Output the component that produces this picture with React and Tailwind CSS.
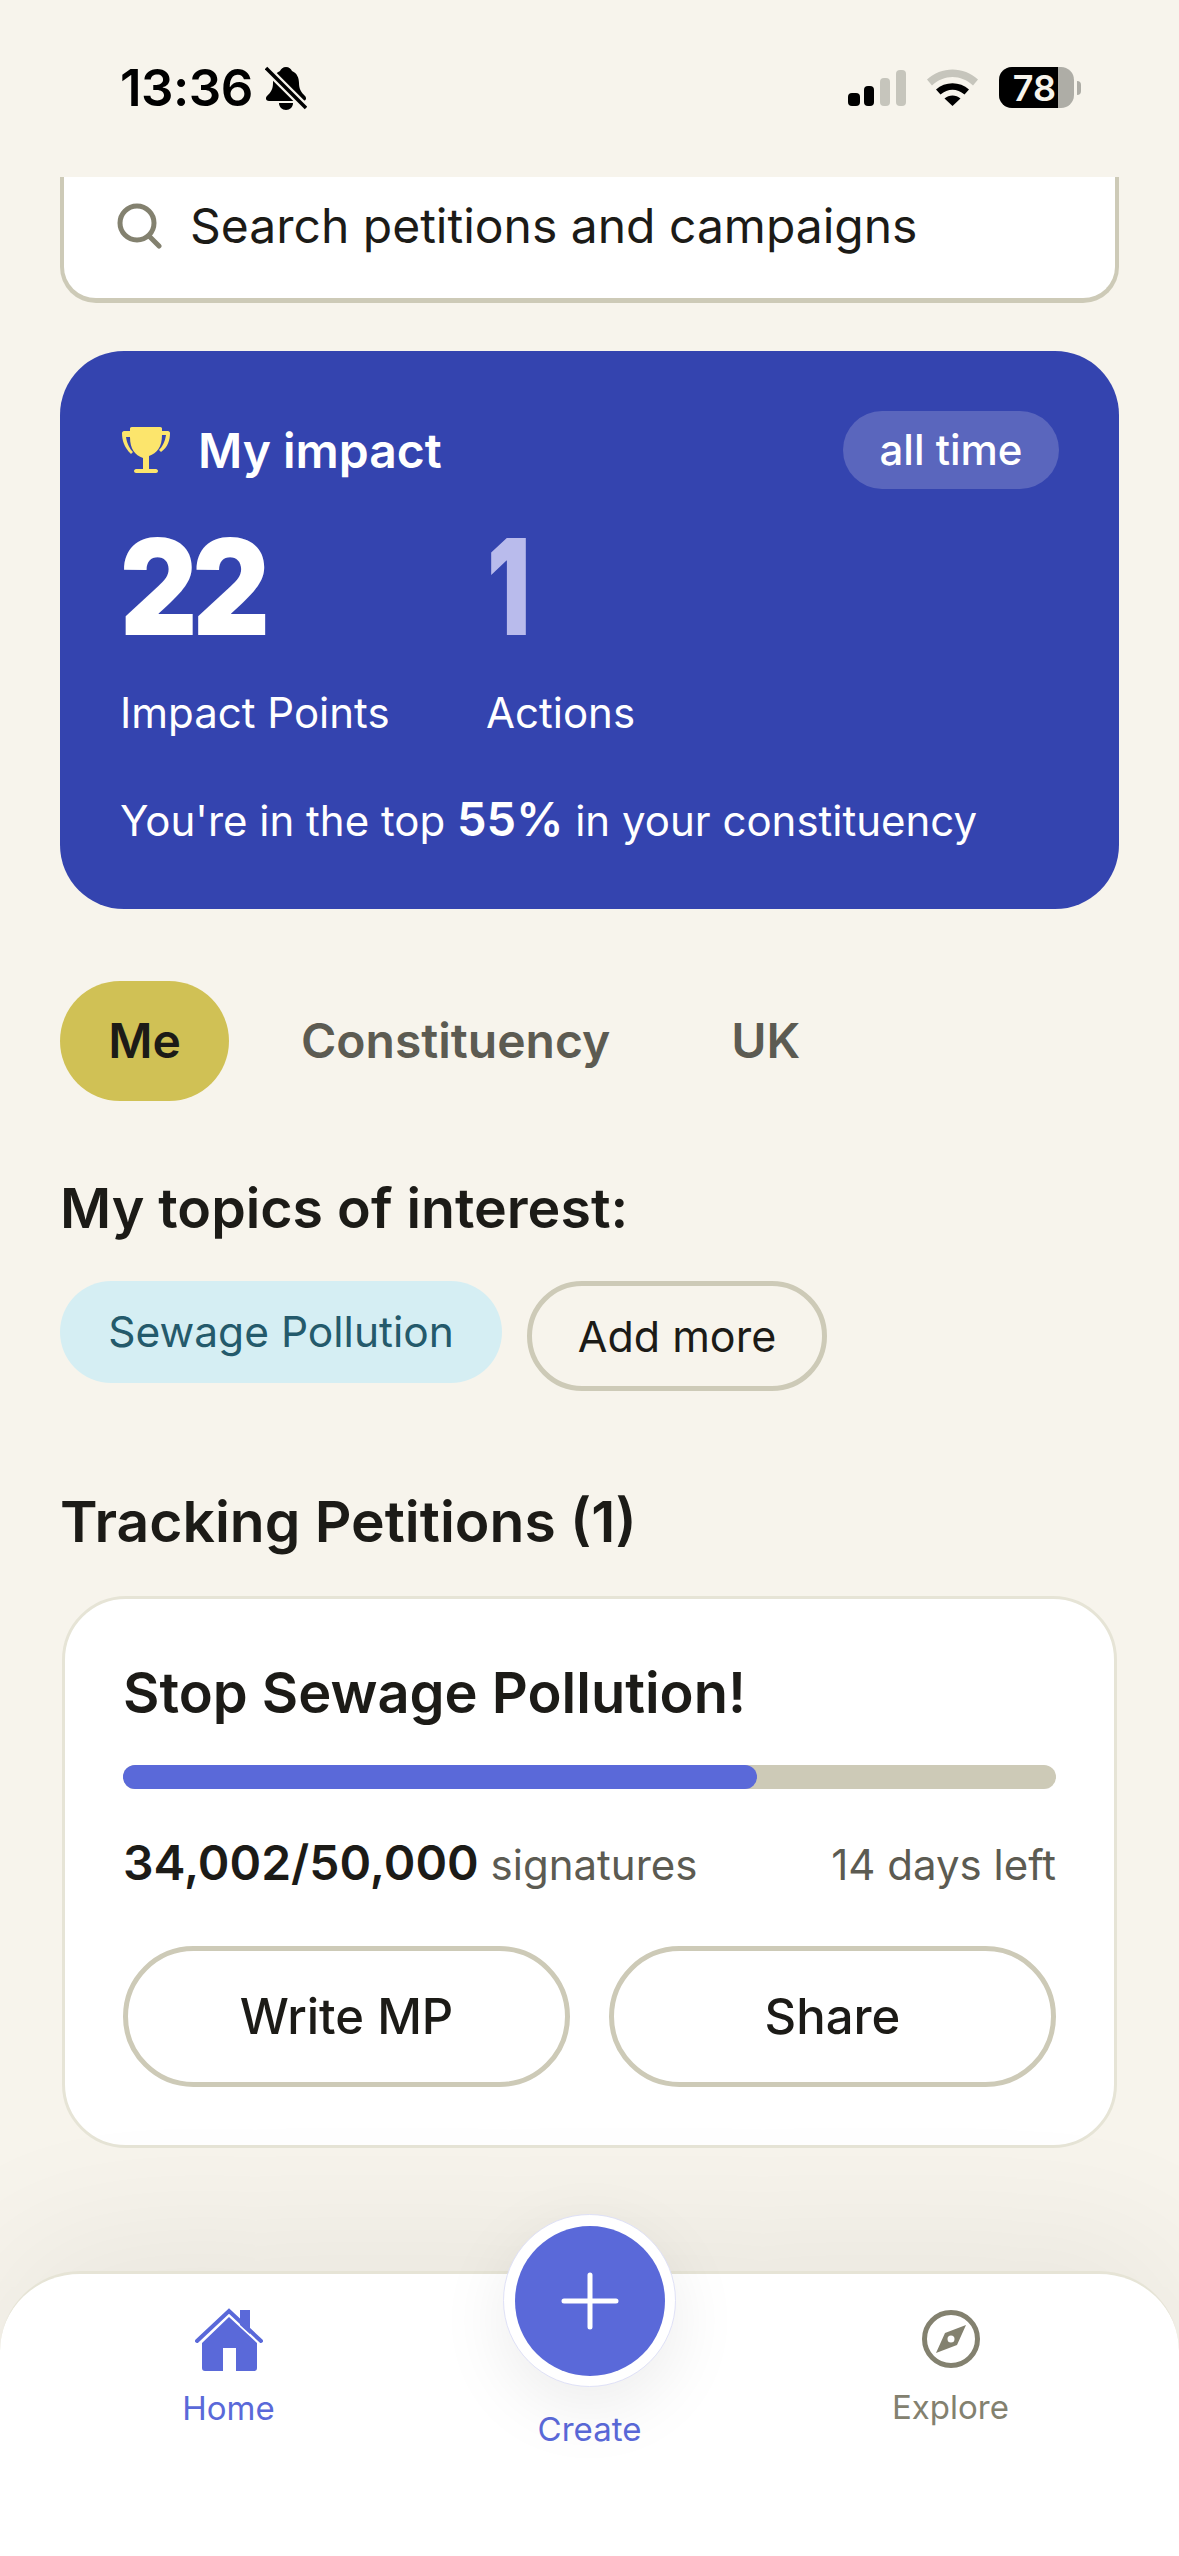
const StatusBar = () => {
  return (
    <div className="h-[177px] shrink-0 relative flex items-start justify-between pt-[67px] pl-[120px] pr-[98px]">
      <div className="flex items-center gap-[12px] h-[41px]">
        <span className="font-['Inter'] text-[51px] leading-none font-semibold text-black tracking-[-0.01em]">13:36</span>
        <svg width="42" height="44" viewBox="0 0 42 44">
          <path d="M21 1c3 0 5 2 6 4 5 2 7 7 7 12 0 6 2 9 6 13 2 2 1 5-2 5H4c-3 0-4-3-2-5 4-4 6-7 6-13 0-5 2-10 7-12 1-2 3-4 6-4z" fill="#000" />
          <path d="M14 37h14c0 4-3 7-7 7s-7-3-7-7z" fill="#000" />
          <path d="M1 2l40 40" stroke="#f7f4ec" strokeWidth="8" />
          <path d="M1 2l40 40" stroke="#000" strokeWidth="3.5" />
        </svg>
      </div>
      <div className="flex items-center h-[41px] gap-[21px]">
        <svg width="58" height="36" viewBox="0 0 58 36">
          <rect x="0" y="23" width="12" height="13" rx="4" fill="#000" />
          <rect x="16" y="16" width="10" height="20" rx="4" fill="#000" />
          <rect x="32" y="8" width="10" height="28" rx="4" fill="#c6c5bc" />
          <rect x="48" y="0" width="10" height="36" rx="4" fill="#c6c5bc" />
        </svg>
        <svg width="51" height="37" viewBox="0 0 51 37">
          <path d="M0 10.5C14-3 37-3 51 10.5l-5 6C34 5 17 5 5 16.5z" fill="#c6c5bc" />
          <path d="M9 20.5C18 12 33 12 42 20.5l-4.500 5C30 19 21 19 13.500 25.500z" fill="#000" />
          <path d="M17.500 29.500c4.500-4 11.500-4 16 0L25.500 37z" fill="#000" />
        </svg>
        <div className="flex items-center gap-[3px]">
          <div className="w-[75px] h-[41px] rounded-[13px] overflow-hidden flex bg-[#aeada6]">
            <div className="w-[59px] h-full bg-black flex items-center justify-end pr-[2px]">
              <span className="font-['Inter'] text-[36px] leading-none font-semibold text-[#f7f4ec]">78</span>
            </div>
          </div>
          <div className="w-[4px] h-[14px] rounded-r-full bg-[#aeada6]"></div>
        </div>
      </div>
    </div>
  )
}

const SearchBar = () => {
  return (
    <div className="mx-[60px] h-[126px] shrink-0 bg-white border-x-4 border-b-[5px] border-[#cdcab7] rounded-b-[36px] flex items-center pl-[53px] pb-[24px]">
      <svg width="46" height="46" viewBox="0 0 46 46" fill="none" stroke="#83816f" strokeWidth="5" strokeLinecap="round">
        <circle cx="20" cy="20" r="17" />
        <path d="M32 33l10 10" />
      </svg>
      <span className="ml-[27px] font-['Inter'] text-[48px] leading-none text-[#1c1b17]">Search petitions and campaigns</span>
    </div>
  )
}

const ImpactCard = () => {
  return (
    <div className="mx-[60px] mt-[48px] h-[558px] shrink-0 bg-[#3444af] rounded-[64px] pt-[60px] pl-[60px] pr-[60px] text-white font-['Inter']">
      <div className="flex items-center justify-between h-[78px]">
        <div className="flex items-center gap-[28px] pl-[2px] pt-[2px]">
          <svg width="48" height="48" viewBox="0 0 48 48">
            <path d="M10 0h28c2 0 2 1 2 2v2h6c1 0 2 1 2 2 0 7-2 14-9 19l-2-2c3-3 6-8 7-15h-4c0 12-5 18-13 21v13h7c1 0 2 1 2 2s-1 2-2 2H14c-1 0-2-1-2-2s1-2 2-2h7V31C13 28 8 22 8 10H4c1 7 4 12 7 15l-2 2C2 20 0 13 0 6c0-1 1-2 2-2h6V2c0-1 0-2 2-2z" fill="#fce56c" />
          </svg>
          <span className="text-[48px] leading-none font-semibold">My impact</span>
        </div>
        <div className="h-[78px] w-[216px] rounded-full bg-[#5a66bd] flex items-center justify-center text-[42px] font-medium leading-none">all time</div>
      </div>
      <div className="flex mt-[30px]">
        <div className="w-[367px]">
          <div className="text-[133px] leading-[136px] font-black tracking-[-0.04em] origin-left scale-x-[0.9]">22</div>
          <div className="mt-[33px] text-[42px] leading-[50px]">Impact Points</div>
        </div>
        <div>
          <div className="text-[133px] leading-[136px] font-black text-[#b9bbec] origin-left scale-x-[0.72]">1</div>
          <div className="mt-[33px] text-[42px] leading-[50px] -ml-[1px]">Actions</div>
        </div>
      </div>
      <div className="mt-[51px] text-[42px] leading-[60px] whitespace-nowrap">
        You're in the top <span className="text-[47px] font-semibold">55%</span> in your constituency
      </div>
    </div>
  )
}

const Tabs = () => {
  return (
    <div className="mt-[72px] ml-[60px] flex items-center shrink-0 font-['Inter'] font-semibold text-[48px] leading-none text-[#5c5b52]">
      <div className="w-[169px] h-[120px] rounded-full bg-[#d0c155] text-[#1c1b17] flex items-center justify-center">Me</div>
      <span className="ml-[72px]">Constituency</span>
      <span className="ml-[121px]">UK</span>
    </div>
  )
}

const Topics = () => {
  return (
    <div className="mt-[71px] mx-[60px] shrink-0 font-['Inter']">
      <h2 className="text-[55.500px] leading-[72px] font-semibold text-[#1c1b17]">My topics of interest:</h2>
      <div className="mt-[37px] flex items-start gap-[25px]">
        <div className="w-[442px] h-[102px] rounded-full bg-[#d5eef3] text-[#245a6b] text-[42.500px] flex items-center justify-center">Sewage Pollution</div>
        <div className="w-[300px] h-[110px] rounded-full border-[5px] border-[#cdcab7] text-[#1c1b17] text-[43px] flex items-center justify-center">Add more</div>
      </div>
    </div>
  )
}

const PetitionCard = () => {
  return (
    <div className="mx-[62px] mt-[38px] h-[552px] shrink-0 bg-white border-[3px] border-[#e6e4d6] rounded-[64px] px-[58px] pt-[59px] font-['Inter']">
      <div className="text-[56px] leading-[70px] font-semibold text-[#1c1b17]">Stop Sewage Pollution!</div>
      <div className="mt-[37px] h-[24px] rounded-full bg-[#cdcab7]">
        <div className="h-full w-[68%] rounded-full bg-[#5a69d9]"></div>
      </div>
      <div className="mt-[38px] flex items-baseline justify-between h-[70px] text-[#5c5b52] text-[42px]">
        <div>
          <span className="text-[48px] font-semibold text-[#1c1b17]">34,002/50,000</span> signatures
        </div>
        <span>14 days left</span>
      </div>
      <div className="mt-[49px] flex gap-[39px] text-[49px] font-medium text-[#1c1b17]">
        <div className="flex-1 h-[141px] rounded-full border-[5px] border-[#cdcab7] flex items-center justify-center">Write MP</div>
        <div className="flex-1 h-[141px] rounded-full border-[5px] border-[#cdcab7] flex items-center justify-center">Share</div>
      </div>
    </div>
  )
}

const BottomNav = () => {
  return (
    <nav className="mt-auto h-[285px] shrink-0 relative bg-white rounded-t-[80px] border-t-[3px] border-[#e6e4d6] shadow-[0_-20px_160px_rgba(0,0,0,0.07)] flex justify-center font-['Inter'] text-[33px] leading-none">
      <div className="w-[361px] pt-[34px] flex flex-col items-center text-[#5a69d9]">
        <svg width="68" height="64" viewBox="0 0 68 64">
          <path d="M34 9L7 35v25c0 2 1 3 3 3h18V40h13v23h18c2 0 3-1 3-3V35z" fill="#5a69d9" />
          <path d="M2 33L34 3l32 30" fill="none" stroke="#5a69d9" strokeWidth="4" strokeLinecap="round" />
          <path d="M45 2h10v24l-10-9z" fill="#5a69d9" />
        </svg>
        <span className="mt-[20px]">Home</span>
      </div>
      <div className="w-[361px] pt-[139px] flex flex-col items-center text-[#5a69d9]">
        <span>Create</span>
      </div>
      <div className="w-[361px] pt-[36px] flex flex-col items-center text-[#83816f]">
        <svg width="58" height="58" viewBox="0 0 58 58">
          <circle cx="29" cy="29" r="26.500" fill="none" stroke="#83816f" strokeWidth="5" />
          <path fillRule="evenodd" d="M44 15L35 35 14 43l9-20zM29 25.500a3.500 3.500 0 100 7 3.500 3.500 0 000-7z" fill="#83816f" />
        </svg>
        <span className="mt-[23px]">Explore</span>
      </div>
      {/* Create button sits over the nav's top edge */}
      <div className="absolute left-[503px] top-[-60px] w-[173px] h-[173px] rounded-full bg-white border border-[#dfe1f7] shadow-[0_20px_70px_rgba(0,0,0,0.08)] flex items-center justify-center">
        <div className="w-[150px] h-[150px] rounded-full bg-[#5a69d9] flex items-center justify-center">
          <svg width="58" height="58" viewBox="0 0 58 58" stroke="#fff" strokeWidth="5" strokeLinecap="round">
            <path d="M29 3v52M3 29h52" />
          </svg>
        </div>
      </div>
    </nav>
  )
}

const App = () => {
  return (
    <div className="w-[1179px] h-[2556px] bg-[#f7f4ec] overflow-hidden flex flex-col">
      <StatusBar />
      <SearchBar />
      <ImpactCard />
      <Tabs />
      <Topics />
      <div className="mt-[95px] ml-[60px] shrink-0 font-['Inter'] text-[57px] leading-[72px] font-semibold text-[#1c1b17]">Tracking Petitions (1)</div>
      <PetitionCard />
      <BottomNav />
    </div>
  )
}

export default App
